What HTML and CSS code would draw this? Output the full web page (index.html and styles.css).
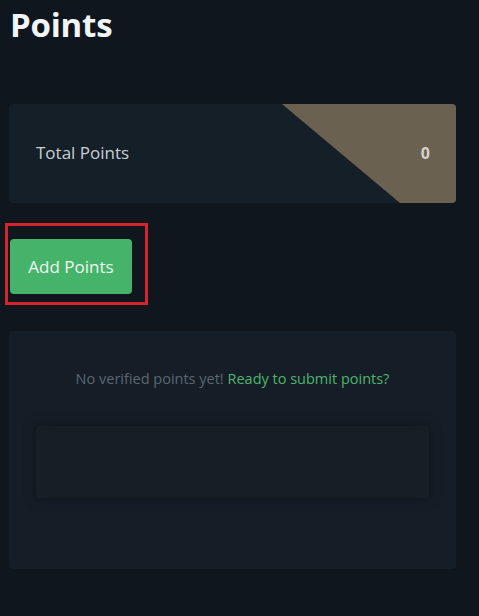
FILE: index.html
```html
<!DOCTYPE html>
<html>
<head>
<meta charset="utf-8">
<link rel="stylesheet" href="styles.css">
</head>
<body>
<div class="page">
  <h1 class="title">Points</h1>
  <div class="total-card">
    <div class="total-label">Total Points</div>
    <div class="total-value">0</div>
  </div>
  <div class="highlight">
    <button class="add-btn">Add Points</button>
  </div>
  <div class="list-card">
    <p class="empty">No verified points yet! <span class="link">Ready to submit points?</span></p>
    <div class="inner-box"></div>
  </div>
</div>
</body>
</html>
```

FILE: styles.css
```css
html, body {
  margin: 0;
  padding: 0;
  background: #10161d;
  font-family: "Open Sans", "Noto Sans", sans-serif;
}
.page {
  padding: 0 23px 0 9px;
  display: flex;
  flex-direction: column;
}
.title {
  margin: 0;
  padding: 2px 0 0 1px;
  height: 104px;
  box-sizing: border-box;
  font-size: 33px;
  font-weight: 700;
  color: #f2f5f8;
  line-height: 46px;
  letter-spacing: -0.2px;
}
.total-card {
  height: 99px;
  box-sizing: border-box;
  border-radius: 4px;
  background:
    linear-gradient(#6b6150, #6b6150) right top / 56px 100% no-repeat,
    linear-gradient(to top right, rgba(107, 97, 80, 0) calc(50% - 0.5px), #6b6150 calc(50% + 0.5px)) right 56px top / 118px 100% no-repeat,
    #151f28;
  display: flex;
  align-items: center;
  justify-content: space-between;
  padding: 0 26px 2px 27px;
}
.total-label {
  color: #c7cfd6;
  font-size: 17px;
}
.total-value {
  color: #d4d2cc;
  font-size: 16px;
  font-weight: 700;
}
.highlight {
  margin: 20px 0 0 -4px;
  width: 143px;
  height: 82px;
  box-sizing: border-box;
  border: 3px solid #d6252a;
  padding: 13px 0 0 2px;
}
.add-btn {
  display: block;
  width: 122px;
  height: 55px;
  border: none;
  border-radius: 4px;
  background: #45b46a;
  color: #eef8f0;
  font-family: inherit;
  font-size: 17px;
  padding: 0;
}
.list-card {
  margin-top: 26px;
  height: 238px;
  box-sizing: border-box;
  border-radius: 4px;
  background: #151e27;
  padding: 37px 27px 0 27px;
}
.empty {
  margin: 0;
  text-align: center;
  font-size: 14.5px;
  color: #5a6670;
  line-height: 22px;
}
.link {
  color: #4cb56c;
}
.inner-box {
  margin-top: 36px;
  height: 72px;
  border-radius: 4px;
  background: #161e26;
  box-shadow: 0 0 12px rgba(5, 10, 15, 0.5);
}
```
